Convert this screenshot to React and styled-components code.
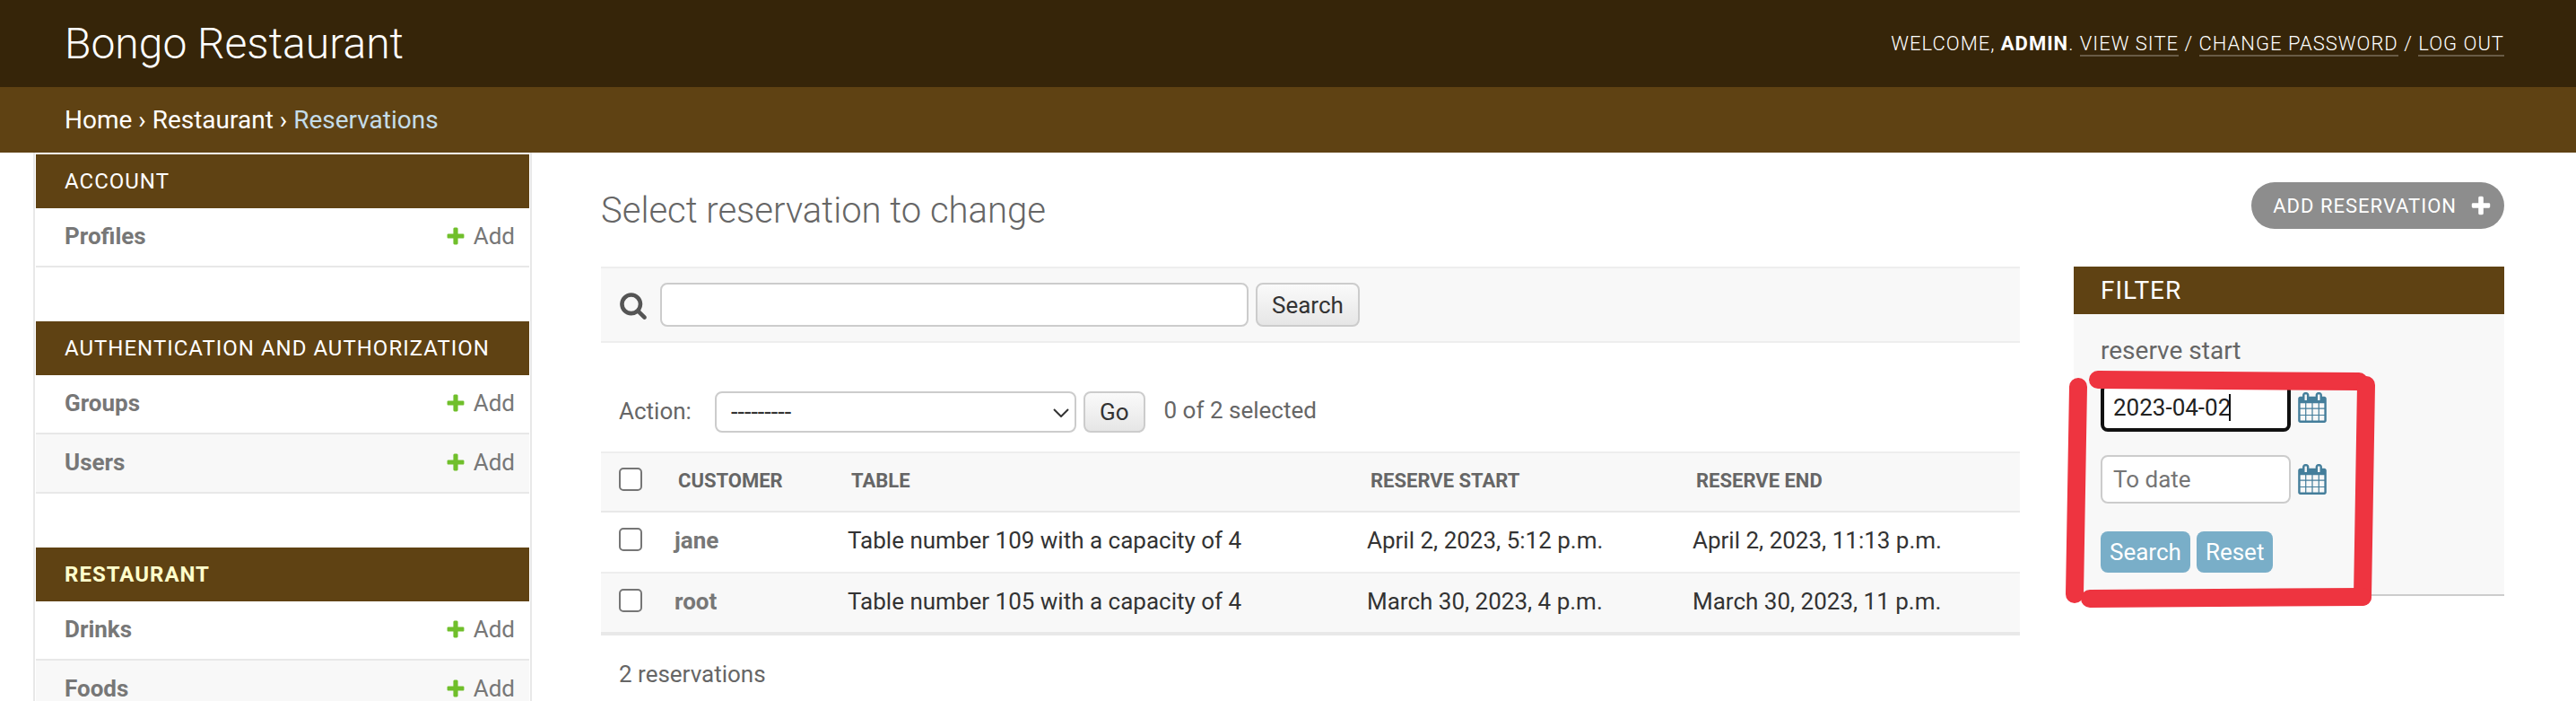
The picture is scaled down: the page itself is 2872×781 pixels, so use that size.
import React from 'react';
import styled, { createGlobalStyle } from 'styled-components';

const PLUS = 'M1600 796v192q0 40-28 68t-68 28h-416v416q0 40-28 68t-68 28h-192q-40 0-68-28t-28-68v-416h-416q-40 0-68-28t-28-68v-192q0-40 28-68t68-28h416v-416q0-40 28-68t68-28h192q40 0 68 28t28 68v416h416q40 0 68 28t28 68z';
const SEARCH = 'M1216 832q0-185-131.5-316.5t-316.5-131.5-316.5 131.5-131.5 316.5 131.5 316.5 316.5 131.5 316.5-131.5 131.5-316.5zm512 832q0 52-38 90t-90 38q-54 0-90-38l-343-342q-179 124-399 124-143 0-273.5-55.5t-225-150-150-225-55.5-273.5 55.5-273.5 150-225 225-150 273.5-55.5 273.5 55.5 225 150 150 225 55.5 273.5q0 220-124 399l343 343q37 37 37 90z';
const CALENDAR = 'M192 1664h288v-288h-288v288zm352 0h320v-288h-320v288zm-352-352h288v-320h-288v320zm352 0h320v-320h-320v320zm-352-384h288v-288h-288v288zm736 736h320v-288h-320v288zm-384-736h320v-288h-320v288zm768 736h288v-288h-288v288zm-384-352h320v-320h-320v320zm-352-864v-288q0-13-9.5-22.5t-22.5-9.5h-64q-13 0-22.5 9.5t-9.5 22.5v288q0 13 9.5 22.5t22.5 9.5h64q13 0 22.5-9.5t9.5-22.5zm736 864h288v-320h-288v320zm-384-384h320v-288h-320v288zm384 0h288v-288h-288v288zm32-480v-288q0-13-9.5-22.5t-22.5-9.5h-64q-13 0-22.5 9.5t-9.5 22.5v288q0 13 9.5 22.5t22.5 9.5h64q13 0 22.5-9.5t9.5-22.5zm384-64v1280q0 52-38 90t-90 38h-1408q-52 0-90-38t-38-90v-1280q0-52 38-90t90-38h128v-96q0-66 47-113t113-47h64q66 0 113 47t47 113v96h384v-96q0-66 47-113t113-47h64q66 0 113 47t47 113v96h128q52 0 90 38t38 90z';

const GlobalStyle = createGlobalStyle`
    html, body {
        margin: 0;
        padding: 0;
        background: #fff;
    }
    body {
        font-family: Roboto, "Liberation Sans", sans-serif;
        color: #333;
    }
`;

const sections = [
    { title: 'Account', models: ['Profiles'] },
    { title: 'Authentication and Authorization', models: ['Groups', 'Users'] },
    { title: 'Restaurant', current: true, models: ['Drinks', 'Foods'] },
];

const reservations = [
    { customer: 'jane', table: 'Table number 109 with a capacity of 4', start: 'April 2, 2023, 5:12 p.m.', end: 'April 2, 2023, 11:13 p.m.' },
    { customer: 'root', table: 'Table number 105 with a capacity of 4', start: 'March 30, 2023, 4 p.m.', end: 'March 30, 2023, 11 p.m.' },
];

function Icon({ d, size, color }) {
    return (
        <svg width={size} height={size} viewBox="0 0 1792 1792" aria-hidden="true">
            <path d={d} fill={color} />
        </svg>
    );
}

function DateField({ value, placeholder, focused }) {
    return (
        <DateRow>
            <DateBox>
                <DateInput $focused={focused} defaultValue={value} placeholder={placeholder} />
                {focused && <Caret />}
            </DateBox>
            <CalendarLink><Icon d={CALENDAR} size={34} color="#447e9b" /></CalendarLink>
        </DateRow>
    );
}

export default function App() {
    return (
        <Page>
            <GlobalStyle />
            <Header>
                <Branding>Bongo Restaurant</Branding>
                <UserTools>
                    WELCOME, <strong>ADMIN</strong>. <ToolLink>VIEW SITE</ToolLink> / <ToolLink>CHANGE PASSWORD</ToolLink> / <ToolLink>LOG OUT</ToolLink>
                </UserTools>
            </Header>
            <Breadcrumbs>
                Home › Restaurant › <Crumb>Reservations</Crumb>
            </Breadcrumbs>
            <Body>
                <Sidebar>
                    {sections.map(section => (
                        <Section key={section.title}>
                            <Caption $current={section.current}>{section.title}</Caption>
                            {section.models.map((model, i) => (
                                <ModelRow key={model} $alt={i % 2 === 1}>
                                    <ModelName>{model}</ModelName>
                                    <AddLink><Icon d={PLUS} size={24} color="#70bf2b" /> Add</AddLink>
                                </ModelRow>
                            ))}
                        </Section>
                    ))}
                </Sidebar>
                <Content>
                    <TitleRow>
                        <Title>Select reservation to change</Title>
                        <AddButton>ADD RESERVATION <Icon d={PLUS} size={26} color="#fff" /></AddButton>
                    </TitleRow>
                    <ChangeList>
                        <ListColumn>
                            <Toolbar>
                                <Icon d={SEARCH} size={32} color="#555" />
                                <SearchInput />
                                <GreyButton>Search</GreyButton>
                            </Toolbar>
                            <Actions>
                                <ActionLabel>Action:</ActionLabel>
                                <SelectBox>
                                    <ActionSelect defaultValue="">
                                        <option value="">---------</option>
                                    </ActionSelect>
                                    <SelectChevron width="18" height="10" viewBox="0 0 18 10">
                                        <path d="M1 1 L9 9 L17 1" fill="none" stroke="#333" strokeWidth="2" />
                                    </SelectChevron>
                                </SelectBox>
                                <GreyButton>Go</GreyButton>
                                <Counter>0 of 2 selected</Counter>
                            </Actions>
                            <Table>
                                <colgroup>
                                    <col width="66" />
                                    <col width="193" />
                                    <col width="579" />
                                    <col width="363" />
                                    <col />
                                </colgroup>
                                <thead>
                                    <tr>
                                        <Th><Check type="checkbox" /></Th>
                                        <Th>Customer</Th>
                                        <Th>Table</Th>
                                        <Th>Reserve start</Th>
                                        <Th>Reserve end</Th>
                                    </tr>
                                </thead>
                                <tbody>
                                    {reservations.map((r, i) => (
                                        <Row key={r.customer} $alt={i % 2 === 1}>
                                            <Td><Check type="checkbox" /></Td>
                                            <CustomerCell>{r.customer}</CustomerCell>
                                            <Td>{r.table}</Td>
                                            <Td>{r.start}</Td>
                                            <Td>{r.end}</Td>
                                        </Row>
                                    ))}
                                </tbody>
                            </Table>
                            <Paginator>2 reservations</Paginator>
                        </ListColumn>
                        <Filter>
                            <FilterTitle>FILTER</FilterTitle>
                            <FilterBody>
                                <FilterLabel>reserve start</FilterLabel>
                                <DateField value="2023-04-02" focused />
                                <DateField placeholder="To date" />
                                <FilterButtons>
                                    <BlueButton>Search</BlueButton>
                                    <BlueButton>Reset</BlueButton>
                                </FilterButtons>
                            </FilterBody>
                        </Filter>
                    </ChangeList>
                </Content>
            </Body>
            {/* hand drawn marker round the date filter */}
            <Marker width="2872" height="781" viewBox="0 0 2872 781">
                <g stroke="#ee3440" strokeWidth="20" strokeLinecap="round" fill="none">
                    <path d="M2317 431 L2313 662" />
                    <path d="M2339 423 L2630 425" />
                    <path d="M2638 429 L2634 665" />
                    <path d="M2330 667 L2634 665" />
                </g>
            </Marker>
        </Page>
    );
}

const Page = styled.div`
    position: relative;
    height: 781px;
    overflow: hidden;
`;

const Header = styled.div`
    height: 97px;
    box-sizing: border-box;
    padding: 0 80px 0 72px;
    background: #362509;
    display: flex;
    align-items: center;
    justify-content: space-between;
`;

const Branding = styled.div`
    font-size: 48px;
    font-weight: 300;
    color: #fff;
`;

const UserTools = styled.div`
    font-size: 22px;
    font-weight: 300;
    letter-spacing: 1px;
    color: #fff;

    strong {
        font-weight: 700;
    }
`;

const ToolLink = styled.span`
    border-bottom: 2px solid rgba(255, 255, 255, 0.25);
`;

const Breadcrumbs = styled.div`
    height: 73px;
    box-sizing: border-box;
    padding-left: 72px;
    background: #5f4213;
    font-size: 28px;
    line-height: 73px;
    color: #fff;
`;

const Crumb = styled.span`
    color: #c4dce8;
`;

const Body = styled.div`
    display: flex;
    align-items: flex-start;
`;

const Sidebar = styled.div`
    width: 556px;
    height: 611px;
    margin-left: 37px;
    box-sizing: border-box;
    flex-shrink: 0;
    padding: 2px 1px 0;
    border-left: 2px solid #e8e8e8;
    border-right: 2px solid #e8e8e8;
`;

const Section = styled.div`
    margin-bottom: 60px;
`;

const Caption = styled.div`
    height: 60px;
    box-sizing: border-box;
    padding-left: 32px;
    display: flex;
    align-items: center;
    background: #5f4213;
    font-size: 24px;
    letter-spacing: 1px;
    text-transform: uppercase;
    font-weight: ${props => (props.$current ? 700 : 400)};
    color: ${props => (props.$current ? '#ffc' : '#fff')};
`;

const ModelRow = styled.div`
    height: 66px;
    box-sizing: border-box;
    padding: 0 16px 2px 32px;
    display: flex;
    align-items: center;
    justify-content: space-between;
    border-bottom: 2px solid #e8e8e8;
    background: ${props => (props.$alt ? '#f8f8f8' : '#fff')};
    font-size: 26px;
`;

const ModelName = styled.span`
    font-weight: 700;
    color: #777;
`;

const AddLink = styled.span`
    display: flex;
    align-items: center;
    gap: 8px;
    color: #777;
`;

const Content = styled.div`
    flex: 1;
    padding: 33px 80px 0 77px;
    min-width: 0;
`;

const TitleRow = styled.div`
    height: 94px;
    display: flex;
    align-items: flex-start;
    justify-content: space-between;
`;

const Title = styled.h1`
    margin: 2px 0 0;
    font-size: 40px;
    line-height: 60px;
    font-weight: 300;
    color: #666;
`;

const AddButton = styled.div`
    height: 52px;
    box-sizing: border-box;
    padding: 0 13px 0 24px;
    border-radius: 26px;
    background: #8d8d8d;
    display: flex;
    align-items: center;
    gap: 14px;
    font-size: 22px;
    letter-spacing: 1px;
    color: #fff;
`;

const ChangeList = styled.div`
    display: flex;
    align-items: flex-start;
    gap: 60px;
`;

const ListColumn = styled.div`
    flex: 1;
    min-width: 0;
`;

const Toolbar = styled.div`
    height: 85px;
    box-sizing: border-box;
    padding-left: 20px;
    display: flex;
    align-items: center;
    gap: 14px;
    background: #f8f8f8;
    border-top: 2px solid #eee;
    border-bottom: 2px solid #eee;
`;

const SearchInput = styled.input`
    width: 656px;
    height: 49px;
    box-sizing: border-box;
    margin-right: -6px;
    border: 2px solid #ccc;
    border-radius: 8px;
    background: #fff;
`;

const GreyButton = styled.button`
    height: 49px;
    box-sizing: border-box;
    padding: 0 16px;
    border: 2px solid #ccc;
    border-radius: 8px;
    background: linear-gradient(to bottom, #fafafa, #e6e6e6);
    font-family: inherit;
    font-size: 26px;
    color: #333;
`;

const Actions = styled.div`
    height: 46px;
    margin: 54px 0 21px;
    padding-left: 20px;
    display: flex;
    align-items: center;
    gap: 8px;

    ${GreyButton} {
        height: 46px;
    }
`;

const ActionLabel = styled.span`
    width: 99px;
    padding-bottom: 2px;
    font-size: 26px;
    color: #666;
`;

const SelectBox = styled.div`
    position: relative;
    display: flex;
`;

const ActionSelect = styled.select`
    appearance: none;
    width: 403px;
    height: 46px;
    box-sizing: border-box;
    padding-left: 16px;
    border: 2px solid #ccc;
    border-radius: 8px;
    background: #fff;
    font-family: inherit;
    font-size: 27px;
    color: #333;
`;

const SelectChevron = styled.svg`
    position: absolute;
    right: 8px;
    top: 19px;
    pointer-events: none;
`;

const Counter = styled.span`
    margin-left: 13px;
    padding-bottom: 4px;
    font-size: 26px;
    color: #666;
`;

const Table = styled.table`
    width: 100%;
    table-layout: fixed;
    border-collapse: collapse;
    border-top: 2px solid #eee;
    border-bottom: 4px solid #e8e8e8;
`;

const Th = styled.th`
    height: 66px;
    box-sizing: border-box;
    padding: 0 0 4px 20px;
    border-bottom: 2px solid #e8e8e8;
    background: #f8f8f8;
    text-align: left;
    font-size: 22px;
    font-weight: 700;
    text-transform: uppercase;
    color: #666;
`;

const Row = styled.tr`
    background: ${props => (props.$alt ? '#f8f8f8' : '#fff')};
`;

const Td = styled.td`
    height: 68px;
    box-sizing: border-box;
    padding: 0 0 4px 16px;
    border-bottom: 2px solid #eee;
    font-size: 26px;
    color: #333;

    &:first-child {
        padding-left: 20px;
    }

    tr:last-child > & {
        border-bottom: none;
    }
`;

const CustomerCell = styled(Td)`
    font-weight: 700;
    color: #777;
`;

const Check = styled.input`
    appearance: none;
    display: block;
    width: 26px;
    height: 26px;
    margin: -2px 0 0;
    border: 2px solid #767676;
    border-radius: 5px;
    background: #fff;
`;

const Paginator = styled.div`
    margin-top: 28px;
    padding-left: 20px;
    font-size: 26px;
    color: #666;
`;

const Filter = styled.div`
    width: 480px;
    flex-shrink: 0;
    background: #f8f8f8;
    border-bottom: 2px solid #ccc;
`;

const FilterTitle = styled.div`
    height: 53px;
    box-sizing: border-box;
    padding-left: 30px;
    display: flex;
    align-items: center;
    background: #5f4213;
    font-size: 28px;
    letter-spacing: 1px;
    color: #fff;
`;

const FilterBody = styled.div`
    padding: 21px 30px 24px;
`;

const FilterLabel = styled.div`
    height: 40px;
    margin-bottom: 16px;
    font-size: 28px;
    line-height: 40px;
    color: #666;
`;

const DateRow = styled.div`
    display: flex;
    align-items: center;
    gap: 7px;
    margin-bottom: 26px;
`;

const DateBox = styled.div`
    position: relative;
`;

const DateInput = styled.input`
    display: block;
    width: 212px;
    height: 54px;
    box-sizing: border-box;
    padding: 0 ${props => (props.$focused ? '10px' : '12px')};
    border: ${props => (props.$focused ? '4px solid #111' : '2px solid #ccc')};
    border-radius: 8px;
    background: #fff;
    font-family: inherit;
    font-size: 26px;
    color: #222;

    &::placeholder {
        color: #757575;
    }
`;

const Caret = styled.span`
    position: absolute;
    left: 143px;
    top: 12px;
    width: 2px;
    height: 30px;
    background: #111;
`;

const CalendarLink = styled.span`
    display: flex;
`;

const FilterButtons = styled.div`
    display: flex;
    gap: 7px;
    margin-top: 31px;
`;

const BlueButton = styled.button`
    height: 46px;
    box-sizing: border-box;
    padding: 0 10px;
    border: none;
    border-radius: 8px;
    background: #79aec8;
    font-family: inherit;
    font-size: 26px;
    color: #fff;
`;

const Marker = styled.svg`
    position: absolute;
    left: 0;
    top: 0;
    pointer-events: none;
`;
